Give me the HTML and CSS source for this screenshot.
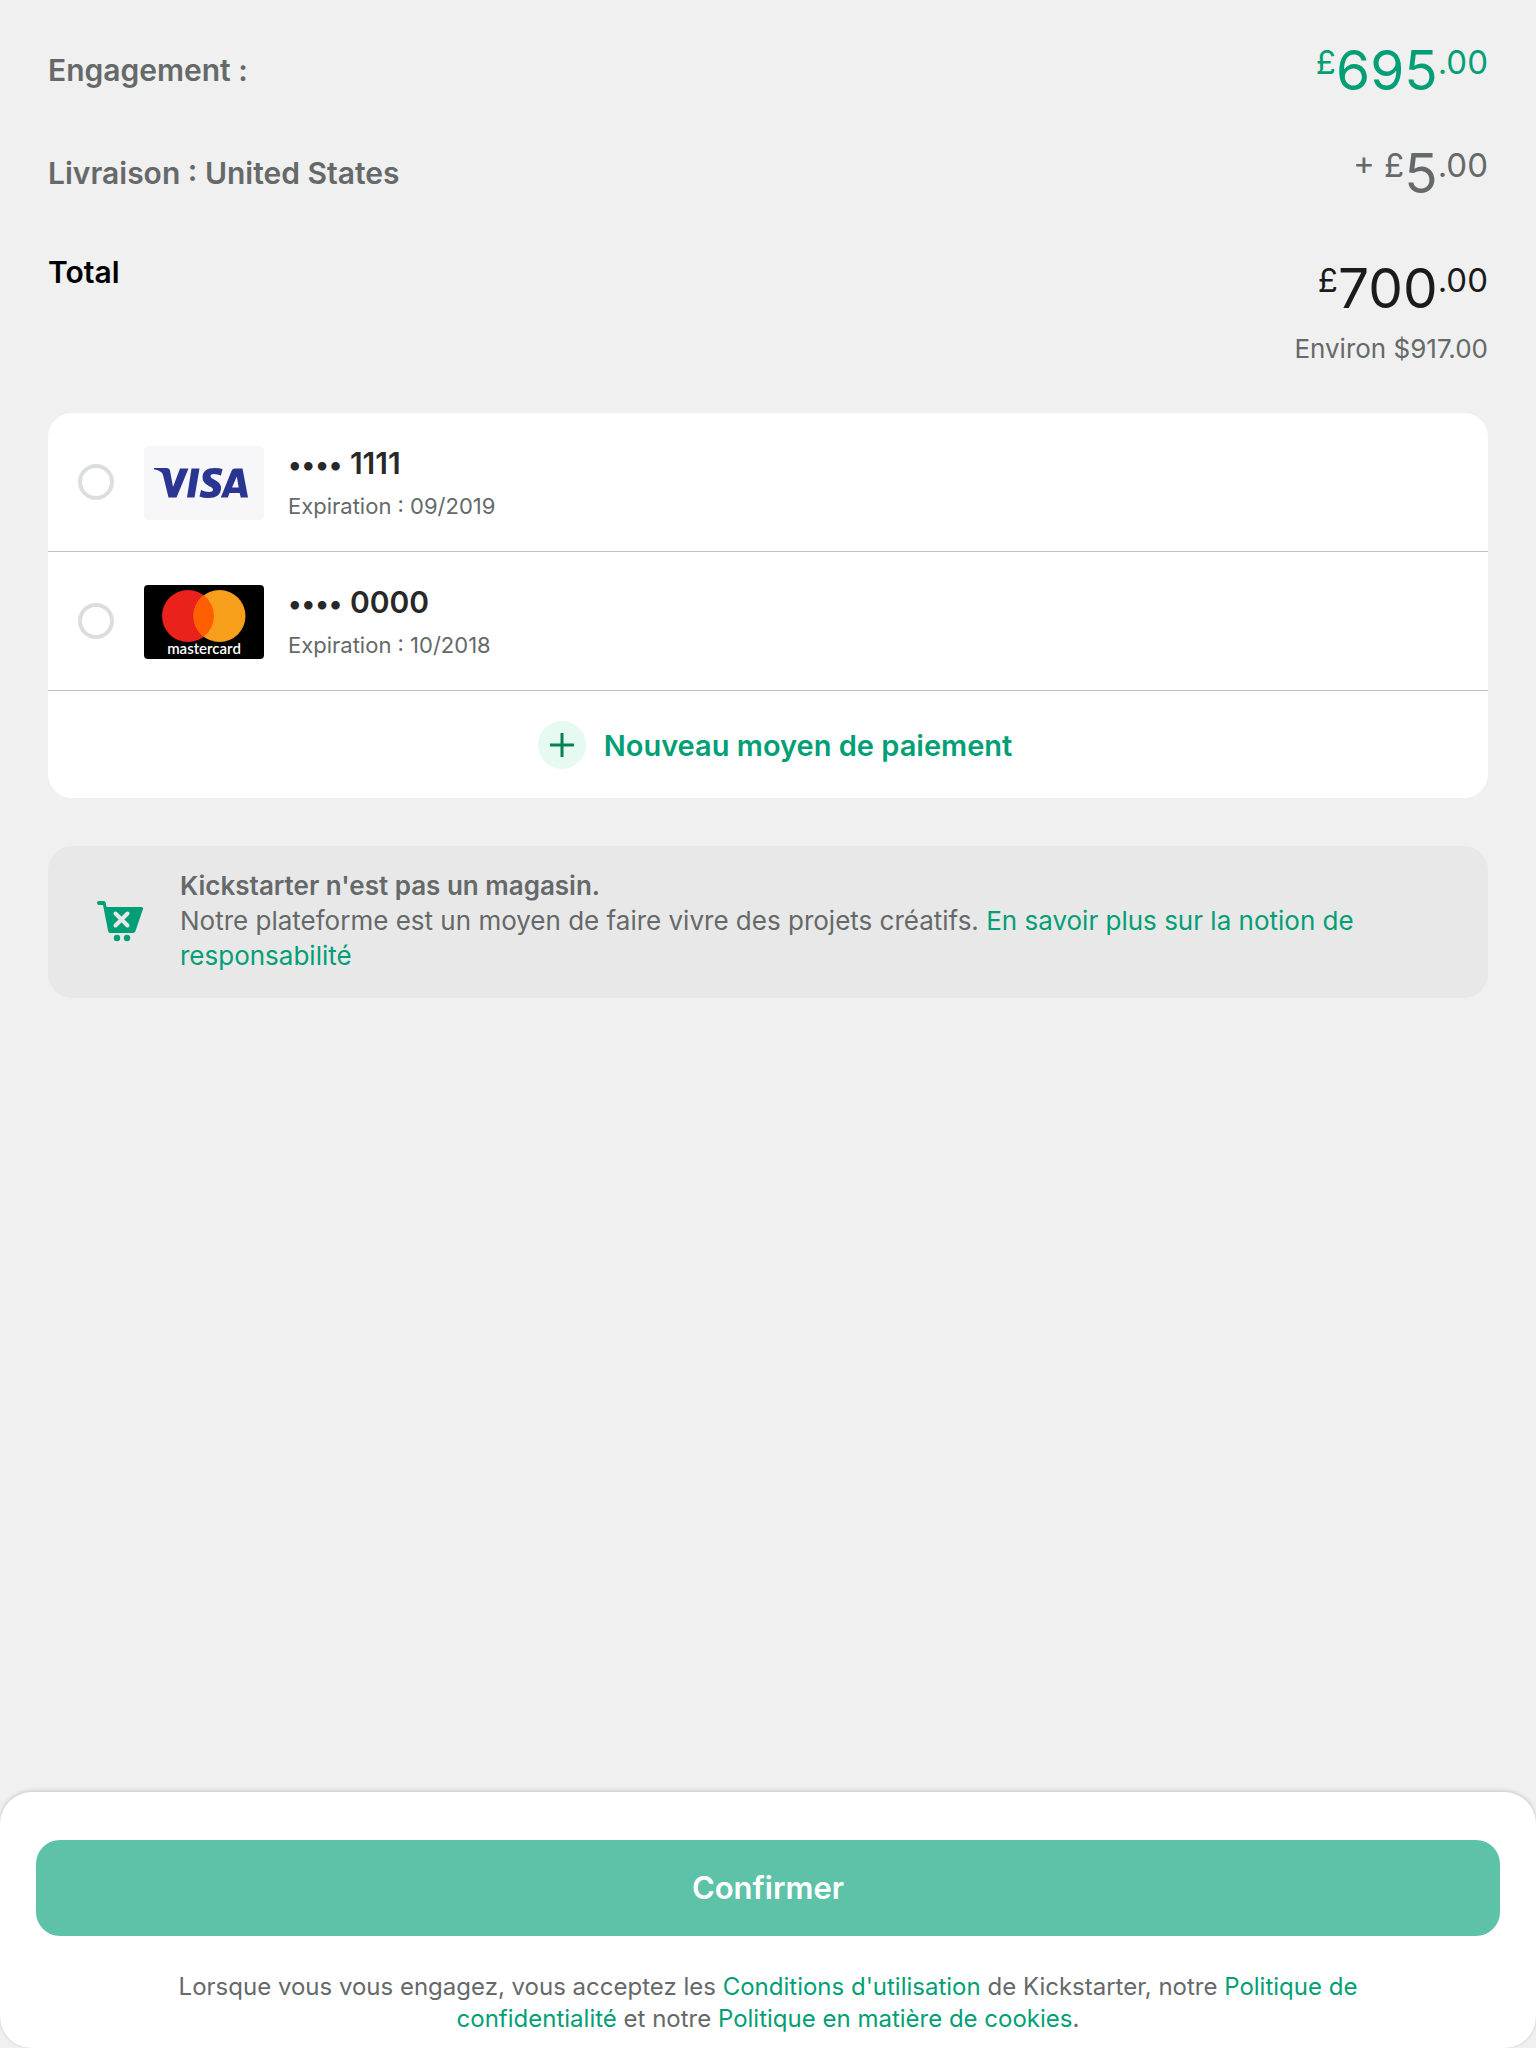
FILE: index.html
```html
<!DOCTYPE html>
<html lang="fr">
<head>
<meta charset="utf-8">
<meta name="viewport" content="width=device-width, initial-scale=1">
<title>Confirmer l'engagement</title>
<link rel="stylesheet" href="styles.css">
</head>
<body>
<main class="content">
  <dl class="summary">
    <div class="summary-row">
      <dt class="label">Engagement :</dt>
      <dd class="amount amount-pledge"><span class="minor">£</span>695<span class="minor">.00</span></dd>
    </div>
    <div class="summary-row">
      <dt class="label">Livraison : United States</dt>
      <dd class="amount amount-shipping"><span class="minor">+ £</span>5<span class="minor">.00</span></dd>
    </div>
    <div class="summary-row summary-total">
      <dt class="label label-total">Total</dt>
      <dd class="total">
        <span class="amount"><span class="minor">£</span>700<span class="minor">.00</span></span>
        <span class="approx">Environ $917.00</span>
      </dd>
    </div>
  </dl>

  <section class="methods" aria-label="Moyens de paiement">
    <label class="method">
      <input class="radio" type="radio" name="card" value="visa">
      <svg class="logo" viewBox="0 0 120 74" aria-hidden="true">
        <rect width="120" height="74" rx="4" fill="#f7f7fa"/>
        <g fill="#2a3592">
          <path d="M10 22H23Q25.500 22 26 24.500L29 41L36 22.500H44.500L32.500 51.500H24.500L19 29Q18.500 27 17 26Q14 24 10 23.200Z"/>
          <path d="M47.500 22.500H55.500L50.500 51.500H43Z"/>
          <path d="M78.500 23L77 29.500Q73.500 28 70 28Q66.500 28 66.500 30.300Q66.500 31.800 71 34Q77 37 77 42Q77 52 64 52Q59 52 55.500 50.500L57 44Q61 46 65 46Q69 46 69 43.500Q69 41.800 65 40Q58.500 37 58.500 31.500Q58.500 22 71 22Q75.500 22 78.500 23Z"/>
          <path fill-rule="evenodd" d="M90.500 22.500H98.500L104 51.500H96.700L95.700 47H85.500L83.800 51.500H76.800L87.500 25Q88.400 22.500 90.500 22.500ZM92.800 30.500L88 41.500H94.700Z"/>
        </g>
      </svg>
      <span class="details">
        <span class="number"><span class="dots">••••</span> 1111</span>
        <span class="expiry">Expiration : 09/2019</span>
      </span>
    </label>
    <label class="method">
      <input class="radio" type="radio" name="card" value="mastercard">
      <svg class="logo" viewBox="0 0 120 74" aria-hidden="true">
        <rect width="120" height="74" rx="4" fill="#000"/>
        <circle cx="44" cy="31" r="26" fill="#eb211c"/>
        <circle cx="75.500" cy="31" r="26" fill="#f79f1b"/>
        <path d="M59.750 10.300A26 26 0 0 1 59.750 51.700A26 26 0 0 1 59.750 10.300Z" fill="#ff5f00"/>
        <text class="logo-text" x="60" y="69" text-anchor="middle">mastercard</text>
      </svg>
      <span class="details">
        <span class="number"><span class="dots">••••</span> 0000</span>
        <span class="expiry">Expiration : 10/2018</span>
      </span>
    </label>
    <button class="add" type="button">
      <svg class="add-icon" viewBox="0 0 48 48" aria-hidden="true">
        <circle cx="24" cy="24" r="24" fill="#e6faf1"/>
        <path d="M24 12V36M12 24H36" stroke="#078057" stroke-width="3"/>
      </svg>
      <span class="add-text">Nouveau moyen de paiement</span>
    </button>
  </section>

  <aside class="notice">
    <svg class="cart" viewBox="0 0 48 42" aria-hidden="true">
      <path d="M3 1H7.500Q9.500 1 9.800 3L10.500 7H45.500Q47.500 7 47 9L39.500 31Q39 33 37 33H14Q12.500 33 12.100 31L7 5H3A2 2 0 0 1 3 1Z" fill="#029f76"/>
      <path d="M19.500 13.500L31.500 25.500M31.500 13.500L19.500 25.500" stroke="#e8e8e8" stroke-width="4" stroke-linecap="round"/>
      <circle cx="21" cy="38" r="3.200" fill="#029f76"/>
      <circle cx="31" cy="38" r="3.200" fill="#029f76"/>
    </svg>
    <p class="notice-text"><strong class="notice-title">Kickstarter n'est pas un magasin.</strong> Notre plateforme est un moyen de faire vivre des projets créatifs. <a class="link" href="#responsabilite">En savoir plus sur la notion de responsabilité</a></p>
  </aside>
</main>

<footer class="footer">
  <button class="confirm" type="button">Confirmer</button>
  <p class="terms">Lorsque vous vous engagez, vous acceptez les <a class="link" href="#conditions">Conditions d'utilisation</a> de Kickstarter, notre <a class="link" href="#confidentialite">Politique de confidentialité</a> et notre <a class="link" href="#cookies">Politique en matière de cookies</a>.</p>
</footer>
</body>
</html>
```
FILE: styles.css
```css
* {
  box-sizing: border-box;
}

body {
  display: flex;
  flex-direction: column;
  min-height: 100vh;
  margin: 0;
  background: #f0f0f0;
  color: #656969;
  font-family: Inter, "Liberation Sans", sans-serif;
}

.content {
  flex: 1;
  display: flex;
  flex-direction: column;
  gap: 48px;
  padding: 36px 48px 48px;
}

.summary {
  margin: 0;
}

.summary-row {
  display: flex;
  justify-content: space-between;
  align-items: center;
  min-height: 68px;
  margin-bottom: 35px;
}

.summary-total {
  align-items: flex-start;
  margin: 0;
}

.label {
  font-size: 30px;
  font-weight: 600;
  line-height: 36px;
}

.label-total {
  padding-top: 12px;
  color: #000;
}

.amount {
  margin: 0;
  font-size: 55px;
  line-height: 68px;
}

.amount-pledge {
  color: #029f76;
}

.minor {
  font-size: 33px;
  line-height: 1;
  vertical-align: 16px;
}

.total {
  display: flex;
  flex-direction: column;
  align-items: flex-end;
  margin: 0;
  padding-top: 12px;
}

.total .amount {
  color: #1b1b1b;
}

.approx {
  margin-top: 11px;
  font-size: 26px;
  line-height: 32px;
}

.methods {
  overflow: hidden;
  border-radius: 24px;
  background: #fff;
}

.method {
  display: flex;
  align-items: center;
  height: 139px;
  padding: 0 30px;
  border-bottom: 1px solid #c2c2c2;
}

.radio {
  appearance: none;
  width: 36px;
  height: 36px;
  margin: 0 30px 0 0;
  border: 4px solid #dcdedd;
  border-radius: 50%;
}

.radio:checked {
  border: 10px solid #029f76;
}

.logo {
  width: 120px;
  height: 74px;
  margin: 2px 24px 0 0;
}

.logo-text {
  fill: #fff;
  font: 600 15px Lato, sans-serif;
}

.details {
  display: flex;
  flex-direction: column;
  gap: 11px;
  padding-top: 3px;
}

.number {
  color: #282828;
  font-size: 30px;
  font-weight: 600;
  line-height: 32px;
}

.dots {
  font-size: 27px;
}

.expiry {
  font-size: 22px;
  line-height: 28px;
}

.add {
  display: flex;
  justify-content: center;
  align-items: center;
  gap: 18px;
  width: 100%;
  height: 107px;
  padding: 0 0 0 14px;
  border: 0;
  background: none;
  color: #029f76;
  font: 600 29px Inter, "Liberation Sans", sans-serif;
}

.add-icon {
  width: 48px;
  height: 48px;
}

.add-text {
  padding-top: 2px;
}

.notice {
  display: flex;
  align-items: center;
  gap: 36px;
  padding: 22px 48px 25px;
  border-radius: 24px;
  background: #e8e8e8;
}

.cart {
  flex: none;
  width: 48px;
  height: 42px;
}

.notice-text {
  margin: 0;
  font-size: 26px;
  line-height: 35px;
}

.notice-title {
  display: block;
  font-weight: 600;
}

.link {
  color: #029f76;
  text-decoration: none;
}

.footer {
  padding: 48px 36px 13px;
  border-radius: 32px;
  background: #fff;
  box-shadow: 0 -1px 4px rgba(0, 0, 0, 0.18);
}

.confirm {
  width: 100%;
  height: 96px;
  padding: 0 0 2px;
  border: 0;
  border-radius: 24px;
  background: #5ec2a9;
  color: #fff;
  font: 600 31px Inter, "Liberation Sans", sans-serif;
}

.terms {
  margin: 35px 0 0;
  padding: 0 120px;
  font-size: 24px;
  line-height: 32px;
  text-align: center;
}
```
